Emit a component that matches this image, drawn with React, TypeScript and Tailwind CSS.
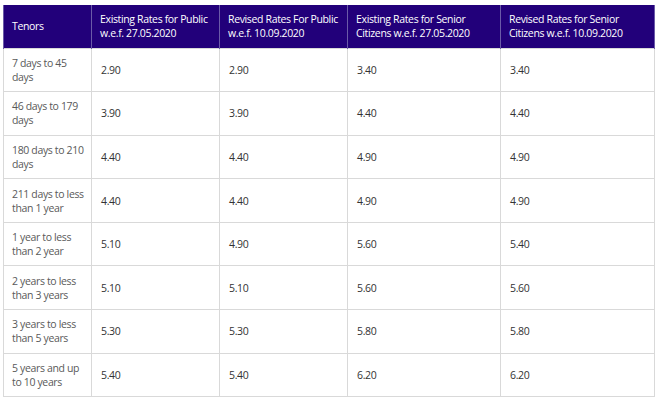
const headers = [
  "Tenors",
  "Existing Rates for Public w.e.f. 27.05.2020",
  "Revised Rates For Public w.e.f. 10.09.2020",
  "Existing Rates for Senior Citizens w.e.f. 27.05.2020",
  "Revised Rates for Senior Citizens w.e.f. 10.09.2020",
];

const rows: string[][] = [
  ["7 days to 45 days", "2.90", "2.90", "3.40", "3.40"],
  ["46 days to 179 days", "3.90", "3.90", "4.40", "4.40"],
  ["180 days to 210 days", "4.40", "4.40", "4.90", "4.90"],
  ["211 days to less than 1 year", "4.40", "4.40", "4.90", "4.90"],
  ["1 year to less than 2 year", "5.10", "4.90", "5.60", "5.40"],
  ["2 years to less than 3 years", "5.10", "5.10", "5.60", "5.60"],
  ["3 years to less than 5 years", "5.30", "5.30", "5.80", "5.80"],
  ["5 years and up to 10 years", "5.40", "5.40", "6.20", "6.20"],
];

export default function App() {
  return (
    <div
      className="w-[660px] h-[401px] bg-white overflow-hidden pt-[5px] pl-[3px]"
      style={{ fontFamily: '"Open Sans", "Liberation Sans", sans-serif' }}
    >
      <table className="table-fixed border-collapse w-[651px] text-[10.5px] leading-[14px] tracking-[-0.35px]">
        <colgroup>
          <col className="w-[88px]" />
          <col className="w-[128px]" />
          <col className="w-[128px]" />
          <col className="w-[153px]" />
          <col className="w-[154px]" />
        </colgroup>
        <thead>
          <tr className="h-[43px] bg-[#22007a]">
            {headers.map((h) => (
              <th
                key={h}
                className="text-left align-middle font-medium text-white pl-2 pr-1 border-x border-[#6b5aa8]"
              >
                {h}
              </th>
            ))}
          </tr>
        </thead>
        <tbody>
          {rows.map((r) => (
            <tr key={r[0]} className="h-[43.6px]">
              {r.map((c, i) => (
                <td
                  key={i}
                  className={
                    i === 0
                      ? "align-middle pl-2 pr-1 border border-[#d9d9d9] text-[#595959]"
                      : "align-middle pl-[9px] pr-1 border border-[#d9d9d9] text-[#333333]"
                  }
                >
                  {c}
                </td>
              ))}
            </tr>
          ))}
        </tbody>
      </table>
    </div>
  );
}
